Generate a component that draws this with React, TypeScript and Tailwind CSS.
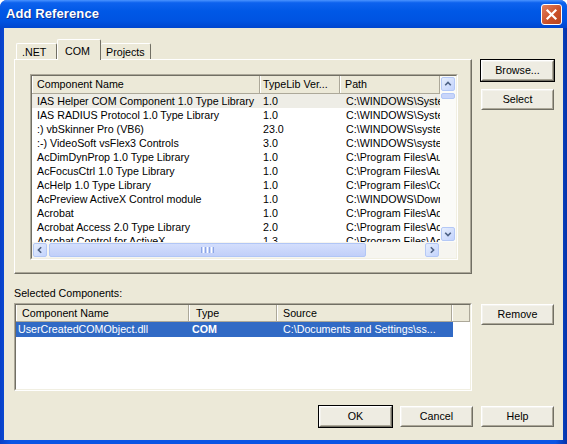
import React from "react";

const F = "font-['Liberation_Sans',Arial,sans-serif]";

const rows: [string, string, string][] = [
  ["IAS Helper COM Component 1.0 Type Library", "1.0", "C:\\WINDOWS\\System32\\iashlpr.dll"],
  ["IAS RADIUS Protocol 1.0 Type Library", "1.0", "C:\\WINDOWS\\System32\\iasrad.dll"],
  [":) vbSkinner Pro (VB6)", "23.0", "C:\\WINDOWS\\system32\\vbskpro.ocx"],
  [":-) VideoSoft vsFlex3 Controls", "3.0", "C:\\WINDOWS\\system32\\vsflex3.ocx"],
  ["AcDimDynProp 1.0 Type Library", "1.0", "C:\\Program Files\\AutoCAD\\acdim.dll"],
  ["AcFocusCtrl 1.0 Type Library", "1.0", "C:\\Program Files\\Autodesk\\acfocus.dll"],
  ["AcHelp 1.0 Type Library", "1.0", "C:\\Program Files\\Common Files\\achelp.dll"],
  ["AcPreview ActiveX Control module", "1.0", "C:\\WINDOWS\\Downloaded Program Files"],
  ["Acrobat", "1.0", "C:\\Program Files\\Adobe\\Acrobat.tlb"],
  ["Acrobat Access 2.0 Type Library", "2.0", "C:\\Program Files\\Adobe\\Access.tlb"],
  ["Acrobat Control for ActiveX", "1.3", "C:\\Program Files\\Adobe\\pdf.ocx"],
];

function Btn({ label, def }: { label: string; def?: boolean }) {
  return (
    <div
      className={`w-[75px] h-[23px] shrink-0 ${
        def ? "border border-black" : "border border-transparent"
      }`}
    >
      <div className="w-full h-full border border-t-white border-l-white border-b-[#716f64] border-r-[#716f64]">
        <div className="w-full h-full border border-t-[#f4f3ee] border-l-[#f4f3ee] border-b-[#aca899] border-r-[#aca899] bg-[#eeece2] flex items-center justify-center leading-none">
          {label}
        </div>
      </div>
    </div>
  );
}

function Arrow({ dir }: { dir: "up" | "down" | "left" | "right" }) {
  const d: Record<string, string> = {
    up: "M4 9 L7.5 5.5 L11 9",
    down: "M4 6 L7.5 9.5 L11 6",
    left: "M9 4 L5.5 7.5 L9 11",
    right: "M6 4 L9.5 7.5 L6 11",
  };
  return (
    <div className="w-[16px] h-[16px] shrink-0 p-[1px]">
      <div className="w-full h-full rounded-[2px] border border-[#b4c8f6] bg-[linear-gradient(135deg,#e6eefc,#c3d3fd)] flex items-center justify-center">
        <svg width="14" height="14" viewBox="0 0 15 15">
          <path d={d[dir]} stroke="#4d6185" strokeWidth="2" fill="none" />
        </svg>
      </div>
    </div>
  );
}

function HeaderCell({ w, pl, text }: { w: string; pl: string; text?: string }) {
  return (
    <div
      className={`${w} ${pl} shrink-0 h-full flex items-center overflow-hidden whitespace-nowrap border-r border-r-[#aca899] border-l border-l-white`}
    >
      {text}
    </div>
  );
}

export default function App() {
  return (
    <div className={`w-[567px] h-[444px] bg-white ${F} text-[10.7px] text-black overflow-hidden`}>
      <div className="w-[567px] h-[444px] flex flex-col rounded-t-[7px] overflow-hidden bg-[linear-gradient(90deg,#0840c8,#0a55e4_2%,#0a55e4_98%,#0632a8)]">
        {/* title bar */}
        <div className="h-[28px] shrink-0 flex items-center pl-[6px] pr-[5px] bg-[linear-gradient(#4a93ff_0%,#0d62ee_10%,#0058e6_40%,#0053e1_75%,#0046cf_100%)]">
          <span className="text-white font-bold text-[13px] tracking-[0.1px] [text-shadow:1px_1px_0_#0c2f8f]">
            Add Reference
          </span>
          <div className="ml-auto w-[21px] h-[21px] rounded-[3px] border border-white bg-[linear-gradient(135deg,#e2805f,#c94f28_60%,#b8461f)] flex items-center justify-center">
            <svg width="13" height="13" viewBox="0 0 13 13">
              <path d="M2.5 2.5 L10.5 10.5 M10.5 2.5 L2.5 10.5" stroke="white" strokeWidth="2.2" strokeLinecap="square" />
            </svg>
          </div>
        </div>

        {/* body */}
        <div className="flex-1 mx-[4px] mb-[4px] bg-[#ECE9D8] flex flex-col pl-[10px] pr-[8px] pt-[11px]">
          {/* top section */}
          <div className="flex items-start">
            <div className="w-[458px] flex flex-col">
              {/* tabs */}
              <div className="h-[20px] flex items-end pl-[2px] relative z-10">
                <div className="w-[41px] h-[16px] border-t border-l border-white border-r border-r-[#716f64] rounded-t-[2px] flex items-center pl-[5px] pt-[1px]">
                  .NET
                </div>
                <div className="w-[44px] h-[21px] -mb-[1px] bg-[#ECE9D8] border-t border-l border-white border-r border-r-[#716f64] rounded-t-[2px] flex items-start pl-[7px] pt-[3px]">
                  COM
                </div>
                <div className="w-[50px] h-[16px] border-t border-white border-r border-r-[#716f64] rounded-t-[2px] flex items-center pl-[5px] pt-[1px]">
                  Projects
                </div>
              </div>
              {/* panel */}
              <div className="h-[215px] border border-t-white border-l-white border-b-[#716f64] border-r-[#716f64]">
                <div className="w-full h-full border-b border-r border-b-[#aca899] border-r-[#aca899] pt-[14px] pl-[15px]">
                  {/* list */}
                  <div className="w-[428px] h-[186px] border border-t-[#aca899] border-l-[#aca899] border-b-white border-r-white">
                    <div className="w-full h-full border border-t-[#716f64] border-l-[#716f64] border-b-[#f1efe2] border-r-[#f1efe2] bg-white flex">
                      <div className="w-[408px] flex flex-col">
                        <div className="h-[166px] overflow-hidden">
                          <div className="h-[18px] flex bg-[#ECE9D8] border-b border-b-[#aca899]">
                            <HeaderCell w="w-[228px]" pl="pl-[4px]" text="Component Name" />
                            <HeaderCell w="w-[80px]" pl="pl-[2px]" text="TypeLib Ver..." />
                            <HeaderCell w="w-[100px]" pl="pl-[4px]" text="Path" />
                          </div>
                          {rows.map((r, i) => (
                            <div
                              key={i}
                              className={`h-[14px] flex items-center whitespace-nowrap ${
                                i === 0 ? "bg-[#eeede6]" : ""
                              }`}
                            >
                              <div className="w-[228px] shrink-0 pl-[5px] overflow-hidden">{r[0]}</div>
                              <div className="w-[80px] shrink-0 pl-[3px] overflow-hidden">{r[1]}</div>
                              <div className="w-[100px] shrink-0 pl-[6px] overflow-hidden">{r[2]}</div>
                            </div>
                          ))}
                        </div>
                        {/* horizontal scrollbar */}
                        <div className="h-[16px] flex bg-[#f6f5f0]">
                          <Arrow dir="left" />
                          <div className="w-[319px] h-[16px] p-[1px] shrink-0">
                            <div className="w-full h-full rounded-[2px] border border-[#b1c6f6] bg-[linear-gradient(#d3defc,#c1cff9)] flex items-center justify-center gap-[1px]">
                              <div className="w-[1px] h-[6px] bg-[#8ca6e6]" />
                              <div className="w-[1px] h-[6px] bg-white" />
                              <div className="w-[1px] h-[6px] bg-[#8ca6e6]" />
                              <div className="w-[1px] h-[6px] bg-white" />
                              <div className="w-[1px] h-[6px] bg-[#8ca6e6]" />
                              <div className="w-[1px] h-[6px] bg-white" />
                              <div className="w-[1px] h-[6px] bg-[#8ca6e6]" />
                            </div>
                          </div>
                          <div className="flex-1" />
                          <Arrow dir="right" />
                        </div>
                      </div>
                      {/* vertical scrollbar */}
                      <div className="w-[16px] flex flex-col">
                        <div className="h-[166px] flex flex-col bg-[#fbfbf8]">
                          <Arrow dir="up" />
                          <div className="h-[8px] w-[16px] p-[1px] shrink-0">
                            <div className="w-full h-full rounded-[2px] border border-[#b1c6f6] bg-[#c8d5fa]" />
                          </div>
                          <div className="flex-1" />
                          <Arrow dir="down" />
                        </div>
                        <div className="h-[16px] bg-[#f6f5f0]" />
                      </div>
                    </div>
                  </div>
                </div>
              </div>
            </div>
            <div className="ml-[8px] mt-[20px] flex flex-col gap-[6px]">
              <Btn label="Browse..." def />
              <Btn label="Select" />
            </div>
          </div>

          {/* Selected components */}
          <div className="mt-[13px] h-[13px] leading-[13px]">Selected Components:</div>
          <div className="mt-[3px] flex items-start">
            <div className="w-[458px] h-[88px] border border-t-[#aca899] border-l-[#aca899] border-b-white border-r-white">
              <div className="w-full h-full border border-t-[#716f64] border-l-[#716f64] border-b-[#f1efe2] border-r-[#f1efe2] bg-white flex flex-col">
                <div className="h-[17px] flex bg-[#ECE9D8] border-b border-b-[#aca899] shrink-0">
                  <HeaderCell w="w-[173px]" pl="pl-[5px]" text="Component Name" />
                  <HeaderCell w="w-[88px]" pl="pl-[6px]" text="Type" />
                  <HeaderCell w="w-[175px]" pl="pl-[5px]" text="Source" />
                  <HeaderCell w="w-[18px]" pl="pl-0" />
                </div>
                <div className="h-[15px] w-[437px] bg-[#316ac5] text-white flex items-center whitespace-nowrap">
                  <div className="w-[173px] shrink-0 pl-[2px] overflow-hidden">UserCreatedCOMObject.dll</div>
                  <div className="w-[88px] shrink-0 pl-[3px] overflow-hidden font-bold">COM</div>
                  <div className="w-[176px] shrink-0 pl-[6px] overflow-hidden">C:\Documents and Settings\ss...</div>
                </div>
              </div>
            </div>
            <div className="ml-[8px]">
              <Btn label="Remove" />
            </div>
          </div>

          {/* bottom buttons */}
          <div className="mt-[14px] flex justify-end gap-[6px]">
            <Btn label="OK" def />
            <Btn label="Cancel" />
            <Btn label="Help" />
          </div>
        </div>
      </div>
    </div>
  );
}
